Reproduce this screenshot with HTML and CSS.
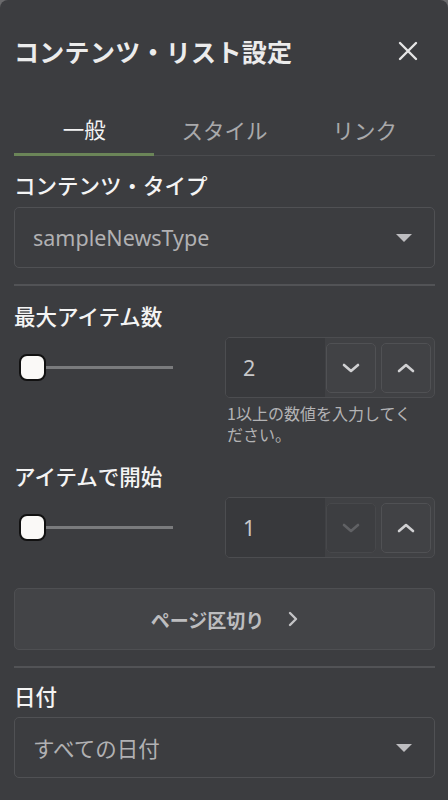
FILE: index.html
```html
<!DOCTYPE html>
<html lang="ja">
<head>
<meta charset="utf-8">
<link rel="stylesheet" href="styles.css">
</head>
<body>
<div class="panel">
  <header class="header">
    <h1 class="title">コンテンツ・リスト設定</h1>
    <button class="close" aria-label="閉じる">
      <svg width="20" height="20" viewBox="0 0 20 20"><path d="M2 2 L18 18 M18 2 L2 18" stroke="#e6e6e6" stroke-width="2.4" stroke-linecap="round" fill="none"/></svg>
    </button>
  </header>
  <nav class="tabs">
    <div class="tab active">一般</div>
    <div class="tab">スタイル</div>
    <div class="tab">リンク</div>
  </nav>
  <main class="body">
    <div class="label first">コンテンツ・タイプ</div>
    <div class="select">
      <span class="select-text">sampleNewsType</span>
      <svg class="caret" width="16" height="8" viewBox="0 0 16 8"><path d="M0 0 H16 L8 8 Z" fill="#bdbdc0"/></svg>
    </div>
    <div class="divider"></div>

    <div class="label">最大アイテム数</div>
    <div class="row">
      <div class="slider"><span class="thumb"></span><span class="track"></span></div>
      <div class="numcol">
        <div class="number">
          <span class="num-value">2</span>
          <span class="step"><svg width="18" height="10" viewBox="0 0 18 10"><path d="M2 2 L9 8 L16 2" stroke="#d0d0d2" stroke-width="2.6" fill="none" stroke-linecap="round" stroke-linejoin="round"/></svg></span>
          <span class="step"><svg width="18" height="10" viewBox="0 0 18 10"><path d="M2 8 L9 2 L16 8" stroke="#d0d0d2" stroke-width="2.6" fill="none" stroke-linecap="round" stroke-linejoin="round"/></svg></span>
        </div>
        <p class="help">1以上の数値を入力してください。</p>
      </div>
    </div>

    <div class="label second">アイテムで開始</div>
    <div class="row">
      <div class="slider"><span class="thumb"></span><span class="track"></span></div>
      <div class="numcol">
        <div class="number">
          <span class="num-value">1</span>
          <span class="step disabled"><svg width="18" height="10" viewBox="0 0 18 10"><path d="M2 2 L9 8 L16 2" stroke="#606164" stroke-width="2.6" fill="none" stroke-linecap="round" stroke-linejoin="round"/></svg></span>
          <span class="step"><svg width="18" height="10" viewBox="0 0 18 10"><path d="M2 8 L9 2 L16 8" stroke="#d0d0d2" stroke-width="2.6" fill="none" stroke-linecap="round" stroke-linejoin="round"/></svg></span>
        </div>
      </div>
    </div>

    <button class="pagebtn">
      <span>ページ区切り</span>
      <svg width="10" height="16" viewBox="0 0 10 16"><path d="M2 2 L8 8 L2 14" stroke="#c4c4c6" stroke-width="2.4" fill="none" stroke-linecap="round" stroke-linejoin="round"/></svg>
    </button>
    <div class="divider d2"></div>

    <div class="label third">日付</div>
    <div class="select">
      <span class="select-text">すべての日付</span>
      <svg class="caret" width="16" height="8" viewBox="0 0 16 8"><path d="M0 0 H16 L8 8 Z" fill="#bdbdc0"/></svg>
    </div>
  </main>
</div>
</body>
</html>
```
FILE: styles.css
```css
* { box-sizing: border-box; }
html, body {
  margin: 0;
  padding: 0;
  background: #6a6a6c;
  font-family: "Noto Sans", "Noto Sans CJK JP", sans-serif;
}
.panel {
  width: 448px;
  min-height: 820px;
  background: #3c3d40;
  border-radius: 8px 8px 0 0;
  overflow: hidden;
}
.header {
  height: 104px;
  display: flex;
  align-items: center;
  justify-content: space-between;
  padding: 0 30px 2px 14px;
}
.title {
  margin: 0;
  font-size: 25px;
  font-weight: 700;
  color: #ececec;
  letter-spacing: 0.3px;
  font-family: "Noto Sans CJK JP", sans-serif;
}
.close {
  background: none;
  border: 0;
  padding: 0;
  width: 20px;
  height: 20px;
  display: flex;
}
.tabs {
  margin: 0 13px 0 14px;
  height: 52px;
  display: grid;
  grid-template-columns: 1fr 1fr 1fr;
  border-bottom: 1px solid #4a4b4e;
}
.tab {
  display: flex;
  align-items: center;
  justify-content: center;
  font-size: 21.5px;
  color: #a9a9ab;
  font-family: "Noto Sans CJK JP", sans-serif;
  padding-bottom: 0;
}
.tab.active {
  color: #f2f2f2;
  border-bottom: 3px solid #6b8558;
  margin-bottom: -1px;
  padding-bottom: 0;
}
.body {
  display: flex;
  flex-direction: column;
  padding: 0 13px 0 14px;
}
.label {
  font-family: "Noto Sans CJK JP", sans-serif;
  font-size: 21.5px;
  font-weight: 500;
  color: #f4f4f4;
  line-height: 28px;
  margin-top: 16px;
  margin-bottom: 7px;
}
.label.first { margin-top: 15px; margin-bottom: 8px; }
.label.second { margin-top: 17px; margin-bottom: 7px; }
.label.third { margin-top: 14px; margin-bottom: 7px; }
.select {
  height: 61px;
  border: 1px solid #505154;
  border-radius: 5px;
  display: flex;
  align-items: center;
  justify-content: space-between;
  padding: 0 22px 0 18px;
}
.select-text {
  font-size: 21.5px;
  color: #b1b1b3;
  font-family: "Noto Sans", "Noto Sans CJK JP", sans-serif;
}
.caret { display: block; }
.divider {
  height: 2px;
  background: #525356;
  margin-top: 16px;
}
.divider.d2 { margin-top: 16px; }
.row {
  display: flex;
  align-items: flex-start;
}
.slider {
  width: 211px;
  height: 61px;
  display: flex;
  align-items: center;
  padding-left: 5px;
}
.thumb {
  width: 27px;
  height: 27px;
  border-radius: 8px;
  background: #faf9f7;
  border: 2px solid #111;
  flex: none;
}
.track {
  width: 127px;
  height: 3px;
  background: #7a7b7d;
}
.numcol {
  flex: 1;
}
.number {
  height: 61px;
  border: 1px solid #4c4d50;
  border-radius: 5px;
  display: flex;
  align-items: center;
  background: #404144;
  overflow: hidden;
}
.num-value {
  align-self: stretch;
  display: flex;
  align-items: center;
  width: 99px;
  padding-left: 17px;
  background: #38393c;
  font-size: 21.5px;
  color: #c8c8ca;
  font-family: "Noto Sans", sans-serif;
}
.step {
  width: 50px;
  height: 50px;
  margin-left: 5px;
  border: 1px solid #505154;
  border-radius: 5px;
  display: flex;
  align-items: center;
  justify-content: center;
  background: #414245;
}
.num-value + .step { margin-left: 1px; }
.step.disabled { background: #3d3e41; border-color: #47484b; }
.help {
  margin: 5px 0 0 2px;
  font-size: 16px;
  line-height: 21px;
  color: #b3b3b5;
  font-family: "Noto Sans CJK JP", sans-serif;
  width: 196px;
}
.pagebtn {
  margin-top: 30px;
  height: 62px;
  border: 1px solid #4e4f52;
  border-radius: 5px;
  background: #434447;
  display: flex;
  align-items: center;
  justify-content: center;
  gap: 24px;
  font-family: "Noto Sans CJK JP", sans-serif;
  font-size: 19px;
  font-weight: 700;
  color: #bdbdbf;
  padding: 0;
}
```
